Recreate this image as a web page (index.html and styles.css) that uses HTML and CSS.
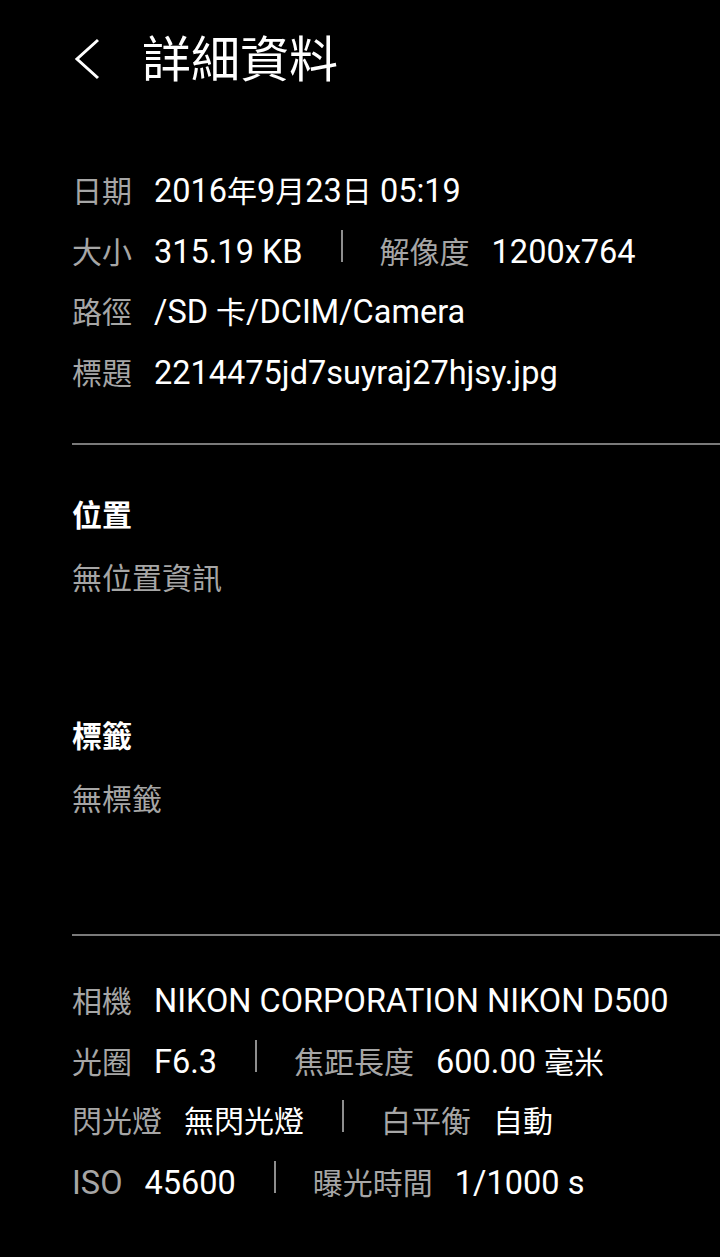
FILE: index.html
```html
<!DOCTYPE html>
<html lang="zh-Hant">
<head>
    <meta charset="UTF-8">
    <meta name="viewport" content="width=device-width, initial-scale=1.0">
    <title>詳細資料</title>
    <link rel="stylesheet" href="styles.css">
</head>
<body>
    <div id="app">
        <header class="top-bar">
            <svg class="back-icon" width="32" height="44" viewBox="0 0 32 44" aria-hidden="true">
                <polyline points="26,2 5,21 26,40" fill="none" stroke="#fff" stroke-width="3"/>
            </svg>
            <h1 class="title">詳細資料</h1>
        </header>

        <section class="info-list">
            <div class="info-row">
                <span class="label">日期</span>
                <span class="value">2016<span class="cjk">年</span>9<span class="cjk">月</span>23<span class="cjk">日</span> 05:19</span>
            </div>
            <div class="info-row">
                <span class="label">大小</span>
                <span class="value">315.19 KB</span>
                <span class="pipe"></span>
                <span class="label">解像度</span>
                <span class="value">1200x764</span>
            </div>
            <div class="info-row">
                <span class="label">路徑</span>
                <span class="value">/SD <span class="cjk">卡</span>/DCIM/Camera</span>
            </div>
            <div class="info-row">
                <span class="label">標題</span>
                <span class="value">2214475jd7suyraj27hjsy.jpg</span>
            </div>
        </section>

        <div class="rule"></div>

        <section class="blocks">
            <div class="block">
                <h2 class="block-title">位置</h2>
                <p class="block-text">無位置資訊</p>
            </div>
            <div class="block">
                <h2 class="block-title">標籤</h2>
                <p class="block-text">無標籤</p>
            </div>
        </section>

        <div class="rule"></div>

        <section class="info-list camera">
            <div class="info-row">
                <span class="label">相機</span>
                <span class="value">NIKON CORPORATION NIKON D500</span>
            </div>
            <div class="info-row">
                <span class="label">光圈</span>
                <span class="value">F6.3</span>
                <span class="pipe"></span>
                <span class="label">焦距長度</span>
                <span class="value">600.00 <span class="cjk">毫米</span></span>
            </div>
            <div class="info-row">
                <span class="label">閃光燈</span>
                <span class="value cjk">無閃光燈</span>
                <span class="pipe"></span>
                <span class="label">白平衡</span>
                <span class="value cjk">自動</span>
            </div>
            <div class="info-row">
                <span class="label latin">ISO</span>
                <span class="value">45600</span>
                <span class="pipe"></span>
                <span class="label">曝光時間</span>
                <span class="value">1/1000 s</span>
            </div>
        </section>
    </div>
</body>
</html>
```

FILE: styles.css
```css
body {
    margin: 0;
    padding: 0;
    background: #000;
    color: #fff;
    font-family: Roboto, "Noto Sans CJK TC", sans-serif;
    overflow: hidden;
}

#app {
    width: 720px;
    height: 1257px;
}

.top-bar {
    height: 120px;
    display: flex;
    align-items: center;
    padding-left: 72px;
}

.back-icon {
    display: block;
    margin-right: 38px;
}

.title {
    margin: 0;
    font-size: 49px;
    font-weight: normal;
    line-height: 1;
}

.info-list {
    padding: 41px 0 0 72px;
}

.info-row {
    height: 60.5px;
    display: flex;
    align-items: baseline;
    font-size: 30px;
    line-height: 60px;
    white-space: nowrap;
}

.label {
    color: #a6a6a6;
    margin-right: 22px;
}

.value {
    color: #fff;
    font-size: 32.5px;
}

/* Latin glyphs run a bit larger than the CJK ones */
.latin {
    font-size: 32.5px;
}

.cjk,
.value.cjk {
    font-size: 30px;
}

.pipe {
    align-self: flex-start;
    width: 2px;
    height: 32px;
    margin: 8px 37px 0 38px;
    background: #8e8e8e;
}

.rule {
    height: 2px;
    margin: 40px 0 0 72px;
    background: #7a7a7a;
}

.blocks {
    padding: 0 0 47px 72px;
}

.block {
    padding: 41px 0 57px;
}

.block-title {
    margin: 0;
    font-size: 30px;
    font-weight: bold;
    line-height: 60px;
}

.block-text {
    margin: 3px 0 0;
    font-size: 30px;
    line-height: 60px;
    color: #a6a6a6;
}

.blocks + .rule {
    margin-top: 0;
}

.camera {
    padding-top: 35px;
}
```
